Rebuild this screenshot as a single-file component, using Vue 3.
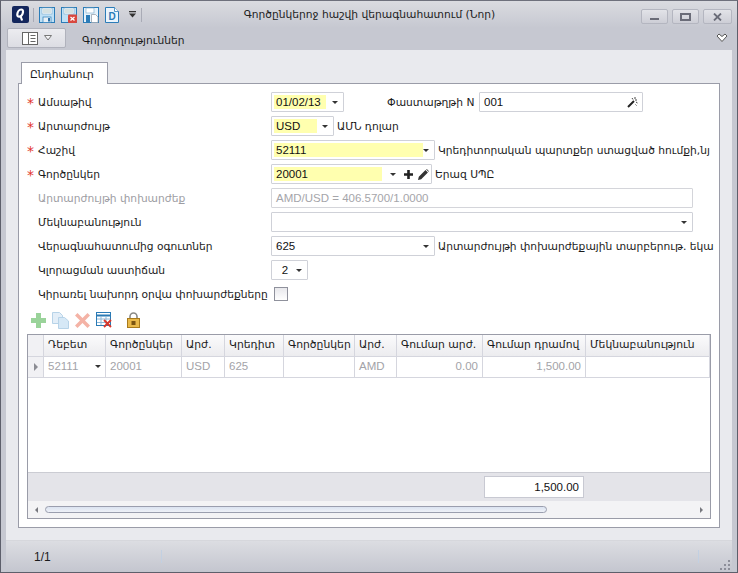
<script setup>
const columns = [
  { title: 'Դեբետ', width: 62 },
  { title: 'Գործընկեր', width: 76 },
  { title: 'Արժ.', width: 43 },
  { title: 'Կրեդիտ', width: 59 },
  { title: 'Գործընկեր', width: 71 },
  { title: 'Արժ.', width: 42 },
  { title: 'Գումար արժ.', width: 86 },
  { title: 'Գումար դրամով', width: 103 },
  { title: 'Մեկնաբանություն', width: 124 },
]
const row = [
  { text: '52111', combo: true },
  { text: '20001' },
  { text: 'USD' },
  { text: '625' },
  { text: '' },
  { text: 'AMD' },
  { text: '0.00', right: true },
  { text: '1,500.00', right: true },
  { text: '' },
]
</script>

<template>
  <div class="window">
    <header class="titlebar">
      <div class="quick">
        <svg class="logo" width="17" height="17" viewBox="0 0 17 17">
          <rect width="17" height="17" rx="2" fill="#13265c" />
          <path d="M9.200 3.500C7 3.500 5.500 6 5.300 8.300c-.1 1.500.6 2.400 1.800 2.400 2 0 3.600-2.400 3.900-4.700.2-1.500-.6-2.500-1.800-2.500zM8.500 10l1.600 4.500" fill="none" stroke="#fff" stroke-width="2.200" />
        </svg>
        <span class="qsep"></span>
        <svg class="qicon" width="16" height="16" viewBox="0 0 16 16">
          <rect x=".5" y=".5" width="15" height="15" fill="#bfe0f5" stroke="#2b7cb8" />
          <rect x="3" y="1" width="10" height="6" fill="#fff" stroke="#7aa8c8" stroke-width=".6" />
          <path d="M4 3h8M4 5h8" stroke="#8aa" stroke-width=".7" />
          <rect x="4" y="10" width="8" height="5.500" fill="#e8f0f6" stroke="#2b7cb8" stroke-width=".7" />
          <rect x="9" y="11" width="2" height="3.500" fill="#2b6fa6" />
        </svg>
        <svg class="qicon" width="16" height="16" viewBox="0 0 16 16">
          <rect x=".5" y=".5" width="15" height="15" fill="#bfe0f5" stroke="#2b7cb8" />
          <rect x="3" y="1" width="10" height="6" fill="#fff" stroke="#7aa8c8" stroke-width=".6" />
          <path d="M4 3h8M4 5h8" stroke="#8aa" stroke-width=".7" />
          <rect x="7" y="7.500" width="9" height="8.500" rx="1" fill="#d9483f" />
          <path d="M9.500 10l4 3.500m0-3.500l-4 3.500" stroke="#fff" stroke-width="1.300" />
        </svg>
        <svg class="qicon" width="16" height="16" viewBox="0 0 16 16">
          <rect x=".5" y=".5" width="15" height="15" fill="#e6f2fb" stroke="#2b7cb8" />
          <rect x="3" y="1" width="8" height="5" fill="#fff" stroke="#7aa8c8" stroke-width=".6" />
          <rect x="3" y="8" width="4" height="7.500" fill="#2b7cb8" />
          <path d="M8.500 7.500h4l2.500 2.500v5.500H8.500z" fill="#fff" stroke="#8c98a4" stroke-width=".7" />
        </svg>
        <svg class="qicon" width="14" height="16" viewBox="0 0 14 16">
          <path d="M.5.500h9l4 4v11H.5z" fill="#eaf4fc" stroke="#2b7cb8" />
          <path d="M9.500.5v4h4" fill="#fff" stroke="#2b7cb8" stroke-width=".8" />
          <text x="3.500" y="12.500" class="doc-letter">D</text>
        </svg>
        <svg class="qdrop" width="7" height="7" viewBox="0 0 7 7">
          <path d="M0 0h7v1.200H0zM0 2.500h7L3.500 6.500z" fill="#333" />
        </svg>
        <span class="qsep last"></span>
      </div>
      <div class="title">Գործընկերոջ հաշվի վերագնահատում (Նոր)</div>
      <div class="winbtns">
        <button class="winbtn"><span class="i-min"></span></button>
        <button class="winbtn"><span class="i-max"></span></button>
        <button class="winbtn close">
          <svg width="9" height="8" viewBox="0 0 9 8"><path d="M1 .5l7 7m0-7l-7 7" stroke="#6a6c78" stroke-width="1.800" /></svg>
        </button>
      </div>
    </header>

    <div class="ribbon">
      <button class="panel-btn">
        <svg width="22" height="13" viewBox="0 0 22 13">
          <rect x=".5" y=".5" width="15" height="12" fill="#fff" stroke="#666" />
          <path d="M6.500 1v11" stroke="#666" />
          <path d="M8.500 3.500h5M8.500 6.500h5M8.500 9.500h5" stroke="#666" />
        </svg>
        <svg width="8" height="6" viewBox="0 0 8 6"><path d="M.5.500h7L4 5z" fill="#f4f4f6" stroke="#777" /></svg>
      </button>
      <span class="ribbon-text">Գործողություններ</span>
      <svg class="chev" width="12" height="10" viewBox="0 0 12 10">
        <path d="M3 1L1 3l5 5.500L11 3 9 1 6 3.500z" fill="#fff" stroke="#555" stroke-linejoin="round" />
      </svg>
    </div>

    <main class="body">
      <div class="tab">Ընդհանուր</div>
      <section class="page">
        <div class="row">
          <label class="lbl"><i class="star">*</i>Ամսաթիվ</label>
          <div class="box w73">
            <span class="val yellow fit">01/02/13</span>
            <span class="arrow"></span>
          </div>
          <span class="doc-lbl">Փաստաթղթի N</span>
          <div class="box w164">
            <span class="val">001</span>
            <svg class="wand" width="11" height="11" viewBox="0 0 11 11">
              <path d="M1 10l6-6" stroke="#222" stroke-width="2" />
              <path d="M8 0v2M10 3H8M10.500 6L9 5M5 1l1 1.500M9.500 8.500L8.500 7.500" stroke="#444" />
            </svg>
          </div>
        </div>
        <div class="row">
          <label class="lbl"><i class="star">*</i>Արտարժույթ</label>
          <div class="box w63">
            <span class="val yellow w-cur">USD</span>
            <span class="arrow"></span>
          </div>
          <span class="side">ԱՄՆ դոլար</span>
        </div>
        <div class="row">
          <label class="lbl"><i class="star">*</i>Հաշիվ</label>
          <div class="box w164">
            <span class="val yellow grow">52111</span>
            <span class="arrow"></span>
          </div>
          <span class="side">Կրեդիտորական պարտքեր ստացված հումքի,նյ</span>
        </div>
        <div class="row">
          <label class="lbl"><i class="star">*</i>Գործընկեր</label>
          <div class="box w161">
            <span class="val yellow w-part">20001</span>
            <span class="arrow a-part"></span>
            <svg class="plus" width="9" height="9" viewBox="0 0 9 9"><path d="M3.200 0h2.600v3.200H9v2.600H5.800V9H3.200V5.800H0V3.200h3.200z" fill="#222" /></svg>
            <svg class="pencil" width="11" height="11" viewBox="0 0 11 11"><path d="M0 11l.8-3.200L7.500 1.100l2.400 2.400L3.200 10.200zM8.200.4l.6-.4 2.200 2.200-.5.6z" fill="#333" /></svg>
          </div>
          <span class="side">Երազ ՍՊԸ</span>
        </div>
        <div class="row">
          <label class="lbl muted">Արտարժույթի փոխարժեք</label>
          <div class="box wfull disabled"><span class="val">AMD/USD = 406.5700/1.0000</span></div>
        </div>
        <div class="row">
          <label class="lbl">Մեկնաբանություն</label>
          <div class="box wfull">
            <span class="val grow"></span>
            <span class="arrow"></span>
          </div>
        </div>
        <div class="row">
          <label class="lbl">Վերագնահատումից օգուտներ</label>
          <div class="box w164">
            <span class="val grow">625</span>
            <span class="arrow"></span>
          </div>
          <span class="side">Արտարժույթի փոխարժեքային տարբերութ. եկա</span>
        </div>
        <div class="row">
          <label class="lbl">Կլորացման աստիճան</label>
          <div class="box w37">
            <span class="val grow center">2</span>
            <span class="arrow"></span>
          </div>
        </div>
        <div class="row">
          <label class="lbl check-lbl">Կիրառել նախորդ օրվա փոխարժեքները</label>
          <span class="checkbox"></span>
        </div>

        <div class="tools">
          <svg width="15" height="15" viewBox="0 0 15 15"><path d="M5 0h5v5h5v5h-5v5H5v-5H0V5h5z" fill="#9ad39a" /></svg>
          <svg width="17" height="17" viewBox="0 0 17 17">
            <path d="M.5.500h7l3 3v8H.5z" fill="#e3eef8" stroke="#b7d3e8" />
            <path d="M6.500 5.500h6l4 3.500v7.500h-10z" fill="#d6e8f6" stroke="#b7d3e8" />
          </svg>
          <svg width="15" height="15" viewBox="0 0 15 15"><path d="M2.500 0L7.500 5l5-5L15 2.500l-5 5 5 5-2.500 2.500-5-5-5 5L0 12.500l5-5-5-5z" fill="#f4b3a6" /></svg>
          <svg width="16" height="16" viewBox="0 0 16 16">
            <rect x=".5" y=".5" width="14" height="13" fill="#fff" stroke="#2a7ab5" />
            <path d="M1 3.500h13" stroke="#2a7ab5" stroke-width="2" />
            <path d="M1 7h13M1 10.500h13M5 4v9M10 4v9" stroke="#8db8d8" />
            <path d="M8 8l7 7m0-7l-7 7" stroke="#d8362a" stroke-width="1.800" />
          </svg>
          <svg class="lock" width="13" height="16" viewBox="0 0 13 16">
            <path d="M3 7V4.500a3.500 3.500 0 0 1 7 0V7" fill="none" stroke="#8a8a86" stroke-width="1.600" />
            <rect x=".5" y="6.500" width="12" height="9" fill="#e9b949" stroke="#a87a1c" />
            <rect x="4.500" y="9" width="4" height="4" fill="#7c5510" />
          </svg>
        </div>

        <div class="grid">
          <div class="grow-row head">
            <div class="cell ind"></div>
            <div v-for="(c, i) in columns" :key="i" class="cell" :style="{ width: c.width + 'px' }">{{ c.title }}</div>
          </div>
          <div class="grow-row data">
            <div class="cell ind"><span class="tri"></span></div>
            <div
              v-for="(c, i) in row"
              :key="i"
              class="cell"
              :class="{ right: c.right }"
              :style="{ width: columns[i].width + 'px' }"
            >
              {{ c.text }}
              <span v-if="c.combo" class="arrow cell-arrow"></span>
            </div>
          </div>
          <div class="grid-empty"></div>
          <div class="grid-foot">
            <div class="total">1,500.00</div>
          </div>
          <div class="hscroll">
            <span class="tri-l"></span>
            <span class="thumb"></span>
            <span class="tri-r"></span>
          </div>
        </div>
      </section>
    </main>

    <footer class="status">
      <span class="count">1/1</span>
      <span class="ssep"></span>
      <span class="ssep end"></span>
      <svg class="grip" width="11" height="11" viewBox="0 0 11 11">
        <path d="M8 0h2v2H8zM4 4h2v2H4zM8 4h2v2H8zM0 8h2v2H0zM4 8h2v2H4zM8 8h2v2H8z" fill="#8c8e99" />
      </svg>
    </footer>
  </div>
</template>

<style scoped>
.window {
  width: 738px;
  height: 573px;
  box-sizing: border-box;
  border: 1px solid #5d5f6b;
  border-top-color: #6e707c;
  display: flex;
  flex-direction: column;
  overflow: hidden;
  background: #c6c8d1;
  font-family: "DejaVu Sans", sans-serif;
  font-size: 10.7px;
  color: #1b1b1b;
}
.titlebar {
  height: 27px;
  flex-shrink: 0;
  display: flex;
  align-items: center;
  background: linear-gradient(#dadbe0, #c6c8d1);
}
.quick {
  width: 155px;
  display: flex;
  align-items: center;
  padding-left: 11px;
  box-sizing: border-box;
}
.logo { margin-right: 4px; }
.qsep {
  width: 1px;
  height: 14px;
  background: #a9abb6;
  margin-right: 5px;
}
.qsep.last { margin: 0 0 0 5px; }
.qicon { margin-right: 6px; flex-shrink: 0; }
.qdrop { margin-left: 4px; }
.doc-letter {
  font-family: "Liberation Sans", sans-serif;
  font-size: 10px;
  font-weight: 700;
  fill: #2b7cb8;
}
.title {
  flex: 1;
  text-align: center;
  margin-left: -58px;
  color: #222;
}
.winbtns {
  width: 91px;
  display: flex;
  gap: 4px;
  margin: 4px 5px 0 0;
  box-sizing: border-box;
  justify-content: flex-end;
}
.winbtn {
  width: 27px;
  height: 15px;
  padding: 0;
  border: 1px solid #b4b6c0;
  border-radius: 2px;
  background: linear-gradient(#e2e3e8, #cdced6);
  display: flex;
  align-items: center;
  justify-content: center;
}
.winbtn.close { width: 29px; }
.i-min {
  width: 9px;
  height: 2px;
  margin-top: 5px;
  background: #6a6c78;
}
.i-max {
  width: 7px;
  height: 4px;
  border: 2px solid #6a6c78;
}
.ribbon {
  height: 22px;
  flex-shrink: 0;
  display: flex;
  align-items: flex-start;
  background: #c6c8d1;
  padding-left: 6px;
}
.panel-btn {
  width: 59px;
  height: 20px;
  padding: 0;
  border: 1px solid #b0b2bc;
  border-radius: 2px;
  background: linear-gradient(#ececf0, #dcdde3);
  display: flex;
  align-items: center;
  justify-content: center;
  gap: 0;
}
.ribbon-text {
  margin: 6px 0 0 16px;
  line-height: 14px;
}
.chev { margin: 5px 9px 0 auto; }
.body {
  flex: 1;
  min-height: 0;
  margin: 0 5px;
  background: #e9eaee;
  padding: 12px 12px 12px;
  display: flex;
  flex-direction: column;
}
.tab {
  align-self: flex-start;
  width: 87px;
  height: 22px;
  box-sizing: border-box;
  margin: 0 0 -1px 3px;
  border: 1px solid #9a9ca8;
  border-bottom: 0;
  background: #fff;
  position: relative;
  z-index: 1;
  padding: 5px 0 0 8px;
  line-height: 14px;
}
.page {
  flex: 1;
  box-sizing: border-box;
  border: 1px solid #9a9ca8;
  background: #fff;
  padding: 8px;
  display: flex;
  flex-direction: column;
}
.row {
  display: flex;
  align-items: center;
  height: 20px;
  margin-bottom: 4px;
  flex-shrink: 0;
}
.lbl {
  width: 244px;
  flex-shrink: 0;
  padding-left: 11px;
  box-sizing: border-box;
  position: relative;
  white-space: nowrap;
}
.check-lbl { width: 247px; }
.lbl.muted { color: #9d9da3; }
.star {
  position: absolute;
  left: 0;
  top: -1px;
  color: #e2342c;
  font-style: normal;
  font-size: 14px;
}
.box {
  height: 20px;
  box-sizing: border-box;
  border: 1px solid #cfd1d8;
  border-radius: 1px;
  display: flex;
  align-items: center;
  padding: 2px;
  background: #fff;
  flex-shrink: 0;
}
.w73 { width: 73px; }
.w63 { width: 63px; }
.w164 { width: 164px; }
.w161 { width: 161px; }
.w37 { width: 37px; }
.wfull { width: 422px; }
.val {
  display: block;
  height: 14px;
  line-height: 14px;
  padding: 0 2px;
  font-family: "Liberation Sans", sans-serif;
  font-size: 11.5px;
  color: #111;
}
.yellow { background: #ffffaf; }
.grow { flex: 1; }
.center { text-align: center; }
.fit { width: 48px; }
.w-cur { width: 39px; }
.w-part { width: 104px; }
.arrow {
  width: 0;
  height: 0;
  border-left: 3px solid transparent;
  border-right: 3px solid transparent;
  border-top: 3px solid #333;
  margin: 0 3px 0 auto;
  flex-shrink: 0;
}
.a-part { margin: 0 8px 0 8px; }
.plus { margin-right: 5px; }
.side {
  margin-left: 3px;
  white-space: nowrap;
}
.doc-lbl {
  margin-left: 43px;
  width: 92px;
  white-space: nowrap;
}
.wand { margin: 0 2px 0 auto; }
.disabled { border-color: #d4d5da; }
.disabled .val { color: #a5a5aa; }
.checkbox {
  width: 12px;
  height: 12px;
  border: 1px solid #8f919c;
  background: linear-gradient(#e8e8ec, #fff);
}
.tools {
  height: 22px;
  margin-top: 1px;
  display: flex;
  align-items: center;
  gap: 6px;
  padding-left: 4px;
  flex-shrink: 0;
}
.lock { margin-left: 9px; }
.grid {
  flex: 1;
  min-height: 0;
  margin-top: 3px;
  border: 1px solid #9a9ca8;
  display: flex;
  flex-direction: column;
  box-sizing: border-box;
}
.grow-row {
  display: flex;
  height: 20px;
  flex-shrink: 0;
  border-bottom: 1px solid #d5d6de;
}
.head {
  height: 21px;
  background: linear-gradient(#fbfbfc, #ececef);
}
.cell {
  box-sizing: border-box;
  border-right: 1px solid #d5d6de;
  padding: 0 4px;
  line-height: 19px;
  white-space: nowrap;
  overflow: hidden;
  flex-shrink: 0;
  position: relative;
}
.head .cell { font-size: 10.8px; }
.cell.ind {
  width: 16px;
  padding: 0;
  background: #f1f1f4;
  display: flex;
  align-items: center;
  justify-content: center;
}
.data .cell {
  color: #a3a3a8;
  font-family: "Liberation Sans", sans-serif;
  font-size: 11.5px;
}
.right { text-align: right; }
.tri {
  width: 0;
  height: 0;
  border-left: 4px solid #8b8c93;
  border-top: 4px solid transparent;
  border-bottom: 4px solid transparent;
}
.cell-arrow {
  position: absolute;
  right: 4px;
  top: 8px;
  margin: 0;
}
.grid-empty { flex: 1; min-height: 0; }
.grid-foot {
  height: 29px;
  flex-shrink: 0;
  background: #e4e4e9;
  border-top: 1px solid #cbccd3;
  box-sizing: border-box;
  padding: 3px 0 0 456px;
}
.total {
  width: 100px;
  height: 22px;
  box-sizing: border-box;
  background: #fff;
  border: 1px solid #c8c9d2;
  text-align: right;
  padding-right: 4px;
  line-height: 21px;
  color: #111;
  font-family: "Liberation Sans", sans-serif;
  font-size: 11.5px;
}
.hscroll {
  height: 17px;
  flex-shrink: 0;
  background: #f3f3f5;
  display: flex;
  align-items: center;
  padding: 0 7px;
}
.thumb {
  width: 502px;
  height: 7px;
  margin-left: 7px;
  border: 1px solid #9a9eae;
  border-radius: 4px;
  background: linear-gradient(#dbe3f1, #eef1f7);
  box-sizing: border-box;
}
.tri-l {
  width: 0;
  height: 0;
  border-right: 3px solid #77787f;
  border-top: 3px solid transparent;
  border-bottom: 3px solid transparent;
}
.tri-r {
  width: 0;
  height: 0;
  margin-left: auto;
  border-left: 3px solid #77787f;
  border-top: 3px solid transparent;
  border-bottom: 3px solid transparent;
}
.status {
  height: 32px;
  flex-shrink: 0;
  margin: 0 5px;
  border-top: 1px solid #d6d7dc;
  background: linear-gradient(#dcdde2, #c4c6cf);
  box-sizing: border-box;
  display: flex;
  align-items: center;
  position: relative;
}
.count {
  margin-left: 28px;
  width: 127px;
  font-family: "Liberation Sans", sans-serif;
  font-size: 12px;
}
.ssep {
  width: 1px;
  height: 13px;
  background: #c2d0e2;
}
.ssep.end { margin-left: auto; margin-right: 33px; }
.grip {
  position: absolute;
  right: 1px;
  bottom: 1px;
}
</style>

<style>
html, body { margin: 0; padding: 0; background: #fff; }
</style>
